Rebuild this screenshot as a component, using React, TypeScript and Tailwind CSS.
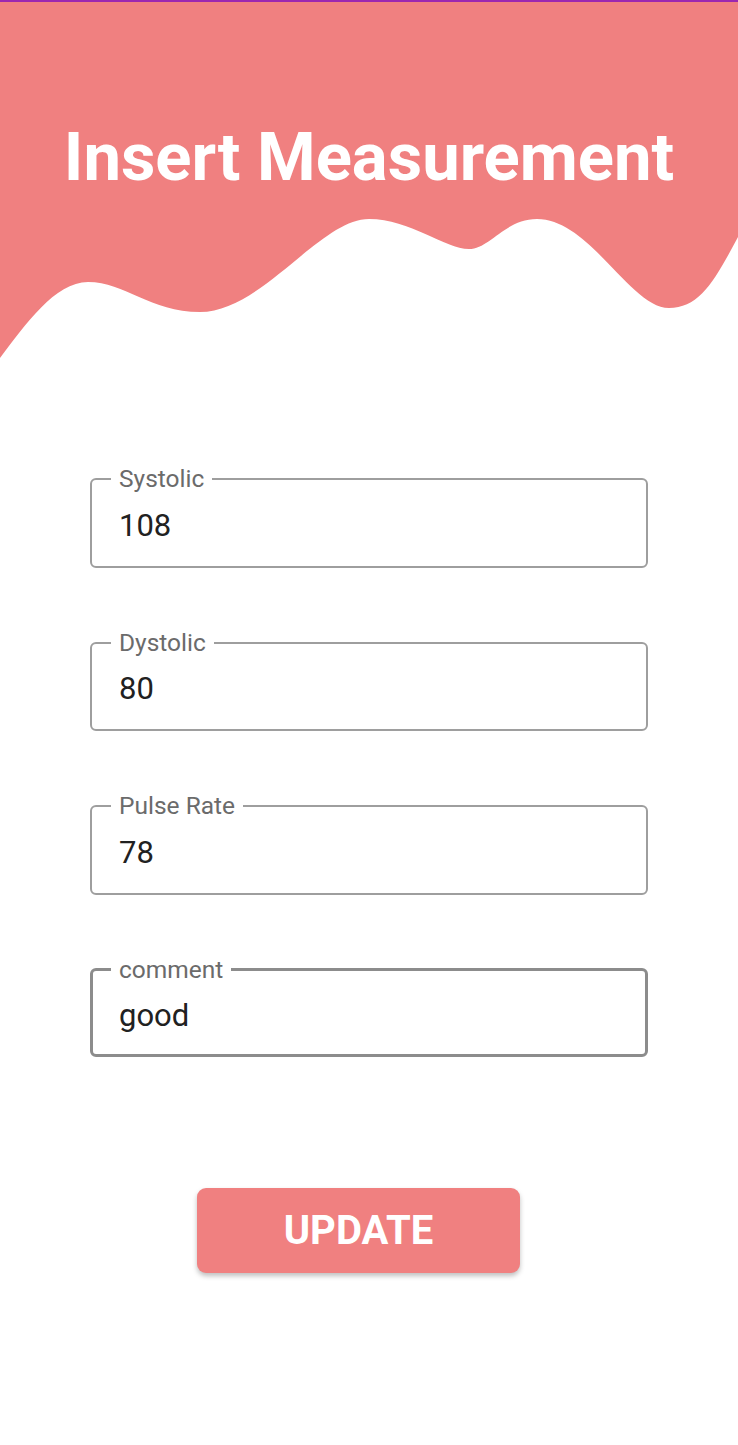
import React from "react";

const fields = [
  { label: "Systolic", value: "108", focused: false },
  { label: "Dystolic", value: "80", focused: false },
  { label: "Pulse Rate", value: "78", focused: false },
  { label: "comment", value: "good", focused: true },
];

function Field({ label, value, focused }: { label: string; value: string; focused: boolean }) {
  return (
    <fieldset
      className={
        focused
          ? "w-[558px] rounded-[6px] border-[3px] border-[#8c8c8c] px-[18px] pb-[20px]"
          : "w-[558px] rounded-[6px] border-2 border-[#9e9e9e] px-[19px] pb-[22px]"
      }
    >
      <legend className="px-[8px] text-[24.5px] leading-[24.5px] text-[#6b6b6b]">{label}</legend>
      <div className="mt-[16px] pl-[8px] text-[31px] leading-[36px] text-[#212121]">{value}</div>
    </fieldset>
  );
}

export default function App() {
  return (
    <div className="min-h-[1445px] w-[738px] bg-white" style={{ fontFamily: "Roboto, 'Noto Sans', sans-serif" }}>
      <div className="h-[2px] bg-[#9c27b0]" />
      <div className="relative h-[358px]">
        <svg className="absolute inset-0" width="738" height="358" viewBox="0 2 738 358">
          <path
            d="M0 0 H738 V237 C715 280 700 308 669 308 C630 308 590 219 537 219 C505 219 490 249 469 249 C445 249 410 219 369 219 C320 219 262 312 200 312 C150 312 125 282 88 282 C55 282 25 325 0 358 Z"
            fill="#F08080"
          />
        </svg>
        <h1 className="relative pt-[115px] text-center text-[67px] font-bold leading-[80px] text-white">
          Insert Measurement
        </h1>
      </div>
      <div className="flex flex-col gap-[63px] pl-[90px] pt-[107px]">
        {fields.map((f) => (
          <Field key={f.label} {...f} />
        ))}
      </div>
      <div className="pl-[197px] pt-[131px]">
        <button className="h-[85px] w-[323px] rounded-[9px] bg-[#F08080] text-[40px] font-bold text-white shadow-[0_3px_5px_rgba(0,0,0,0.25)]">
          UPDATE
        </button>
      </div>
    </div>
  );
}
